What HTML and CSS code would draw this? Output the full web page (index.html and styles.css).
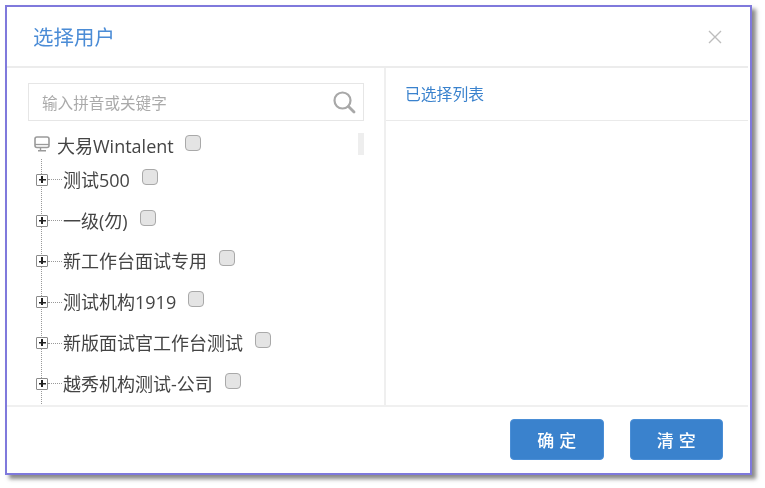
FILE: index.html
```html
<!DOCTYPE html>
<html lang="zh-CN">
<head>
<meta charset="utf-8">
<title>选择用户</title>
<link rel="stylesheet" href="styles.css">
</head>
<body>
<div class="dialog">
  <header class="dialog-head">
    <h1 class="dialog-title">选择用户</h1>
    <svg class="close-icon" width="14" height="14" viewBox="0 0 14 14"><path d="M1 1 13 13M13 1 1 13" fill="none" stroke="#bdbdbd" stroke-width="1.4"/></svg>
  </header>
  <div class="dialog-body">
    <section class="pane-left">
      <div class="search">
        <span class="search-hint">输入拼音或关键字</span>
        <svg class="search-icon" width="24" height="24" viewBox="0 0 24 24"><circle cx="10.5" cy="10.5" r="8" fill="none" stroke="#a8a8a8" stroke-width="2.2"/><path d="M16.5 16.5 22 22" fill="none" stroke="#a8a8a8" stroke-width="2.8" stroke-linecap="round"/></svg>
      </div>
      <div class="tree">
        <span class="scroll-thumb"></span>
        <div class="tree-root">
          <svg class="root-icon" width="16" height="17" viewBox="0 0 16 17"><rect x="1" y="1" width="14" height="10.5" rx="2" fill="#fff" stroke="#9a9a9a" stroke-width="1.6"/><path d="M1 8.5H15" stroke="#9a9a9a" stroke-width="1.3"/><path d="M6.5 12v2M4 14.7h8" stroke="#9a9a9a" stroke-width="1.4"/></svg>
          <span class="node-label">大易Wintalent</span>
          <span class="check check-root"></span>
        </div>
        <ul class="tree-children">
          <li class="node"><span class="expander"></span><span class="dash"></span><span class="node-label">测试500</span><span class="check"></span></li>
          <li class="node"><span class="expander"></span><span class="dash"></span><span class="node-label">一级(勿)</span><span class="check"></span></li>
          <li class="node"><span class="expander"></span><span class="dash"></span><span class="node-label">新工作台面试专用</span><span class="check"></span></li>
          <li class="node"><span class="expander"></span><span class="dash"></span><span class="node-label">测试机构1919</span><span class="check"></span></li>
          <li class="node"><span class="expander"></span><span class="dash"></span><span class="node-label">新版面试官工作台测试</span><span class="check"></span></li>
          <li class="node"><span class="expander"></span><span class="dash"></span><span class="node-label">越秀机构测试-公司</span><span class="check"></span></li>
        </ul>
      </div>
    </section>
    <section class="pane-right">
      <div class="pane-right-head">已选择列表</div>
    </section>
  </div>
  <footer class="dialog-foot">
    <button class="btn" type="button">确定</button>
    <button class="btn" type="button">清空</button>
  </footer>
</div>
</body>
</html>
```

FILE: styles.css
```css
* { box-sizing: border-box; }
html, body { margin: 0; padding: 0; background: #fff; }
body {
  width: 765px;
  height: 488px;
  overflow: hidden;
  padding: 5px 0 0 5px;
  font-family: "Open Sans", "Noto Sans CJK SC", sans-serif;
}
.dialog {
  width: 747px;
  height: 470px;
  display: flex;
  flex-direction: column;
  background: #fff;
  border: 2px solid #7f79dc;
  box-shadow: 4px 4px 4px rgba(60, 60, 60, 0.6);
  filter: blur(0.4px);
}
.dialog-head {
  height: 61px;
  flex: none;
  display: flex;
  align-items: center;
  justify-content: space-between;
  padding: 0 26px 0 26px;
  border-bottom: 2px solid #ececec;
  margin-right: 2px;
}
.dialog-title {
  margin: 0;
  font-size: 20.5px;
  font-weight: 400;
  color: #4b8cd6;
  line-height: 26px;
}
.close-icon { display: block; }
.dialog-body {
  height: 339px;
  flex: none;
  display: flex;
  margin-right: 2px;
  border-bottom: 2px solid #f0f0f0;
}
.pane-left {
  width: 379px;
  flex: none;
  border-right: 2px solid #efefef;
  padding: 15px 21px 0 21px;
  display: flex;
  flex-direction: column;
  overflow: hidden;
}
.search {
  height: 38px;
  flex: none;
  width: 336px;
  border: 1px solid #e6e6e6;
  display: flex;
  align-items: center;
  justify-content: space-between;
  padding: 0 7px 0 13px;
}
.search-hint { font-size: 15.6px; color: #aaa; }
.search-icon { display: block; }
.tree { position: relative; flex: 1; min-height: 0; }
.scroll-thumb {
  position: absolute;
  right: -1px;
  top: 12px;
  width: 6px;
  height: 22px;
  background: #eeeeee;
}
.tree-root {
  display: flex;
  align-items: center;
  height: 38px;
  padding: 11px 0 0 6px;
}
.root-icon { display: block; margin: -3px 7px 0 0; }
.node-label {
  font-size: 18px;
  line-height: 24px;
  color: #444;
  white-space: nowrap;
}
.check {
  width: 16px;
  height: 16px;
  flex: none;
  margin: -6px 0 0 12px;
  background: #e4e4e4;
  border: 1.5px solid #a9a9a9;
  border-radius: 4px;
}
.check-root { margin-left: 11px; }
.tree-children {
  list-style: none;
  margin: 0 0 0 13px;
  padding: 0;
  border-left: 1px dotted #999;
}
.node {
  display: flex;
  align-items: center;
  height: 40.8px;
  padding-top: 1px;
}
.expander {
  position: relative;
  width: 12px;
  height: 12px;
  flex: none;
  margin-left: -6px;
  background: #fff linear-gradient(#222, #222) center / 7px 1.5px no-repeat;
  border: 1px solid #8a8a8a;
  border-radius: 1px;
}
.expander::after {
  content: "";
  position: absolute;
  left: 4px;
  top: 1px;
  width: 1.5px;
  height: 7px;
  background: #222;
}
.dash {
  width: 14px;
  flex: none;
  border-top: 1px dotted #999;
  margin-right: 1px;
}
.pane-right { flex: 1; }
.pane-right-head {
  height: 53px;
  border-bottom: 1px solid #eaeaea;
  padding: 15px 0 0 19px;
  font-size: 15.8px;
  line-height: 22px;
  color: #3a82cd;
}
.dialog-foot {
  flex: 1;
  display: flex;
  justify-content: flex-end;
  align-items: flex-start;
  gap: 26px;
  padding: 12px 27px 0 0;
}
.btn {
  width: 93.5px;
  height: 41px;
  border: 1px solid #4a8ed6;
  border-radius: 4px;
  background: #3a82cd;
  color: #fff;
  font-family: inherit;
  font-size: 17px;
  font-weight: 500;
  letter-spacing: 5px;
  text-indent: 5px;
  padding: 0;
}
```
